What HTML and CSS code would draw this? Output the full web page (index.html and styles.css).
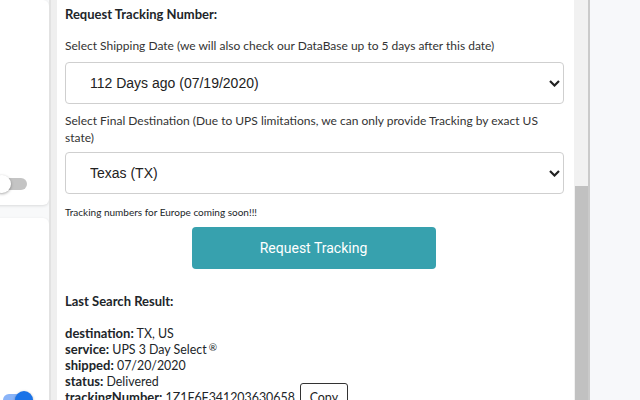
FILE: index.html
```html
<!DOCTYPE html>
<html lang="en">
<head>
	<meta charset="UTF-8">
	<title>tracking</title>
	<link rel="stylesheet" href="styles.css">
</head>
<body>

<div class="side">
	<div class="card card-top">
		<span class="toggle"><span class="knob"></span></span>
	</div>
	<div class="card card-bottom">
		<span class="toggle on"><span class="knob"></span></span>
	</div>
</div>

<div class="divider"></div>

<div class="panel">
	<h4 class="title">Request Tracking Number:</h4>

	<label class="label">Select Shipping Date (we will also check our DataBase up to 5 days after this date)</label>
	<div class="select-wrap">
		<select class="select">
			<option>112 Days ago (07/19/2020)</option>
		</select>
		<svg class="chev" width="11" height="7" viewBox="0 0 11 7"><path d="M1 1 L5.5 5.5 L10 1" fill="none" stroke="#222" stroke-width="2.2"/></svg>
	</div>

	<label class="label label-2">Select Final Destination (Due to UPS limitations, we can only provide Tracking by exact US state)</label>
	<div class="select-wrap select-2">
		<select class="select">
			<option>Texas (TX)</option>
		</select>
		<svg class="chev" width="11" height="7" viewBox="0 0 11 7"><path d="M1 1 L5.5 5.5 L10 1" fill="none" stroke="#222" stroke-width="2.2"/></svg>
	</div>

	<p class="note">Tracking numbers for Europe coming soon!!!</p>

	<div class="center">
		<button class="request">Request Tracking</button>
	</div>

	<div class="result">
		<div class="line"><b>Last Search Result:</b></div>
		<div class="line">&nbsp;</div>
		<div class="line"><b>destination:</b> TX, US</div>
		<div class="line"><b>service:</b> UPS 3 Day Select<span class="reg">&reg;</span></div>
		<div class="line"><b>shipped:</b> 07/20/2020</div>
		<div class="line"><b>status:</b> Delivered</div>
		<div class="line copy-row"><span><b>trackingNumber:</b> 1Z1F6F341203630658</span><button class="copy">Copy</button></div>
	</div>
</div>

<div class="scrollbar"><div class="thumb"></div></div>

<div class="right"></div>

</body>
</html>
```

FILE: styles.css
```css
* {
	box-sizing: border-box;
}
html, body {
	margin: 0;
	height: 400px;
	overflow: hidden;
}
body {
	display: flex;
	background: #f7f8fa;
	font-family: Lato, 'Liberation Sans', sans-serif;
	font-size: 12px;
	color: #212529;
}
.side {
	width: 49px;
	flex: none;
	display: flex;
	flex-direction: column;
	align-items: flex-end;
	overflow: hidden;
	background: #f8f9fa;
}
.card {
	flex: none;
	width: 300px;
	background: #fff;
	border-radius: 0 6px 6px 0;
	box-shadow: 0 1px 3px rgba(0,0,0,0.12);
	display: flex;
	justify-content: flex-end;
}
.card-top {
	height: 205px;
	align-items: flex-end;
	padding: 0 22px 15px 0;
}
.card-bottom {
	margin-top: 13px;
	height: 240px;
	border-radius: 0 6px 0 0;
	padding: 176px 20px 0 0;
	align-items: flex-start;
}
.toggle {
	position: relative;
	display: block;
	width: 26px;
	height: 12px;
	border-radius: 6px;
	background: #c4c4c4;
}
.toggle .knob {
	position: absolute;
	left: -8px;
	top: -3px;
	width: 18px;
	height: 18px;
	border-radius: 50%;
	background: #fff;
	box-shadow: 0 1px 3px rgba(0,0,0,0.35);
}
.toggle.on {
	background: #8ab4f8;
}
.toggle.on .knob {
	left: auto;
	right: -4px;
	background: #1a73e8;
}
.divider {
	width: 8px;
	flex: none;
	background: #efefef;
	border-left: 2px solid #e2e2e2;
}
.panel {
	width: 517px;
	flex: none;
	background: #fff;
	padding: 6px 10px 0 8px;
}
.title {
	margin: 0;
	font-size: 13px;
	line-height: 17px;
	font-weight: bold;
}
.label {
	display: block;
	margin-top: 14px;
	line-height: 17px;
	color: #333;
}
.label-2 {
	margin-top: 8px;
}
.select-wrap {
	position: relative;
	margin-top: 8px;
}
.select-2 {
	margin-top: 6px;
}
.select {
	-webkit-appearance: none;
	appearance: none;
	display: block;
	width: 100%;
	height: 42px;
	padding: 0 30px 0 24px;
	border: 1px solid #cfcfcf;
	border-radius: 4px;
	background: #fff;
	font-family: 'Liberation Sans', Arial, sans-serif;
	font-size: 14px;
	color: #222;
}
.chev {
	position: absolute;
	right: 4px;
	top: 18px;
}
.note {
	margin: 11px 0 0;
	font-size: 10px;
	line-height: 14px;
}
.center {
	display: flex;
	justify-content: center;
	margin-top: 8px;
	padding-right: 2px;
}
.request {
	width: 244px;
	height: 42px;
	border: none;
	border-radius: 4px;
	background: #37a1ae;
	color: #fff;
	font-family: Roboto, sans-serif;
	font-size: 14px;
}
.result {
	margin-top: 24px;
	font-size: 12.4px;
}
.result b {
	font-size: 13px;
	line-height: 16px;
}
.line {
	height: 16px;
	line-height: 16px;
	white-space: nowrap;
}
.reg {
	display: inline-block;
	font-size: 10px;
	line-height: 10px;
	vertical-align: top;
	margin: 1px 0 0 2px;
}
.copy-row {
	display: flex;
	align-items: center;
	height: 28px;
	margin-top: -6px;
	gap: 5px;
}
.copy {
	height: 28px;
	width: 48px;
	padding: 0;
	border: 1px solid #333;
	border-radius: 3px;
	background: #fff;
	font-family: inherit;
	font-size: 12.4px;
	color: #222;
}
.scrollbar {
	width: 14px;
	flex: none;
	background: #f1f1f1;
	padding: 186px 0 0 1px;
}
.thumb {
	height: 300px;
	background: #c1c1c1;
}
.right {
	flex: 1;
	border-left: 2px solid #cacaca;
	background: #f7f8fa;
}
```
